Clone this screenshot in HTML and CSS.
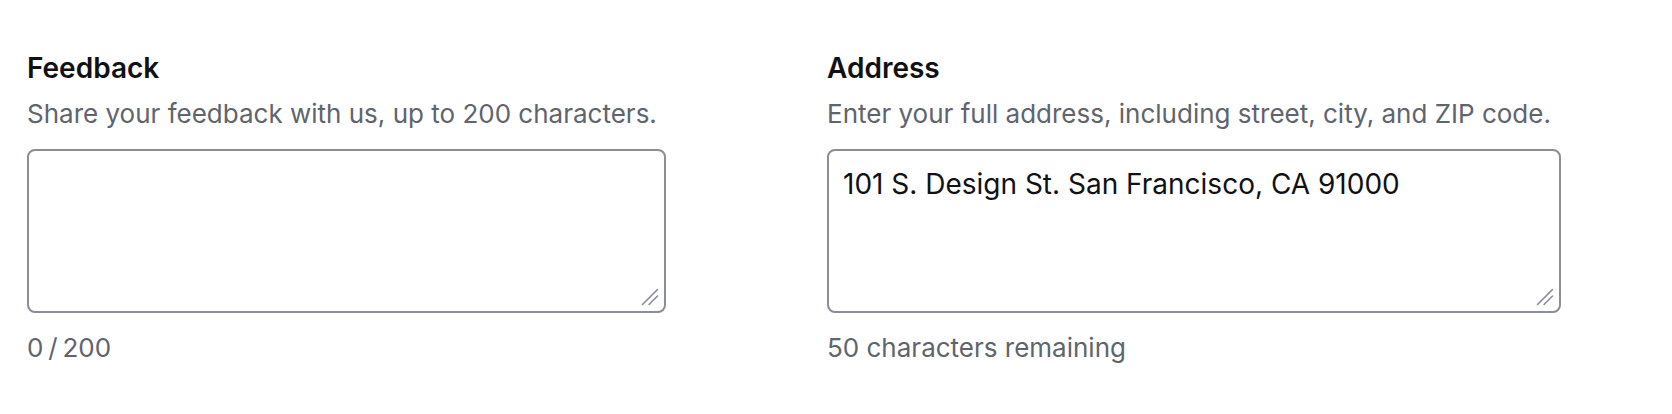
FILE: index.html
```html
<!DOCTYPE html>
<html lang="en">
<head>
<meta charset="utf-8">
<title>Textarea fields</title>
<link rel="stylesheet" href="styles.css">
</head>
<body>
<div class="page">
  <div class="field field-feedback">
    <label class="label" for="feedback">Feedback</label>
    <p class="desc">Share your feedback with us, up to 200 characters.</p>
    <div class="area-wrap">
      <textarea id="feedback" class="textarea"></textarea>
      <svg class="handle" width="18" height="18" viewBox="0 0 18 18" aria-hidden="true">
        <path d="M1.5 16.5 L16.5 1.5 M8 16.5 L16.5 8" fill="none" stroke="#8b8d98" stroke-width="1.6" stroke-linecap="round"/>
      </svg>
    </div>
    <p class="hint hint-count">0 / 200</p>
  </div>
  <div class="field field-address">
    <label class="label" for="address">Address</label>
    <p class="desc">Enter your full address, including street, city, and ZIP code.</p>
    <div class="area-wrap">
      <textarea id="address" class="textarea">101 S. Design St. San Francisco, CA 91000</textarea>
      <svg class="handle" width="18" height="18" viewBox="0 0 18 18" aria-hidden="true">
        <path d="M1.5 16.5 L16.5 1.5 M8 16.5 L16.5 8" fill="none" stroke="#8b8d98" stroke-width="1.6" stroke-linecap="round"/>
      </svg>
    </div>
    <p class="hint">50 characters remaining</p>
  </div>
</div>
</body>
</html>
```
FILE: styles.css
```css
html, body {
  margin: 0;
  padding: 0;
  background: #ffffff;
}
body {
  font-family: Inter, "Noto Sans", "Liberation Sans", sans-serif;
  color: #1c2024;
}
.page {
  display: flex;
  gap: 161px;
  padding: 51px 0 0 27px;
}
.field {
  display: flex;
  flex-direction: column;
}
.field-feedback { width: 639px; }
.field-address { width: 734px; }
.label {
  font-size: 28px;
  line-height: 34px;
  font-weight: 600;
  color: #111113;
}
.desc {
  margin: 12.5px 0 19.5px;
  font-size: 26px;
  line-height: 32px;
  color: #60646c;
}
.area-wrap {
  position: relative;
  height: 164px;
}
.textarea {
  box-sizing: border-box;
  display: block;
  width: 100%;
  height: 100%;
  margin: 0;
  padding: 16px 14px;
  border: 2px solid #8b8d98;
  border-radius: 8px;
  font-family: inherit;
  font-size: 28px;
  line-height: 34px;
  color: #111113;
  background: #ffffff;
  resize: none;
  outline: none;
}
.handle {
  position: absolute;
  right: 7px;
  bottom: 7px;
  pointer-events: none;
}
.hint {
  margin: 19px 0 0;
  font-size: 26px;
  line-height: 32px;
  color: #60646c;
}
.hint-count {
  word-spacing: -2.5px;
}
```
